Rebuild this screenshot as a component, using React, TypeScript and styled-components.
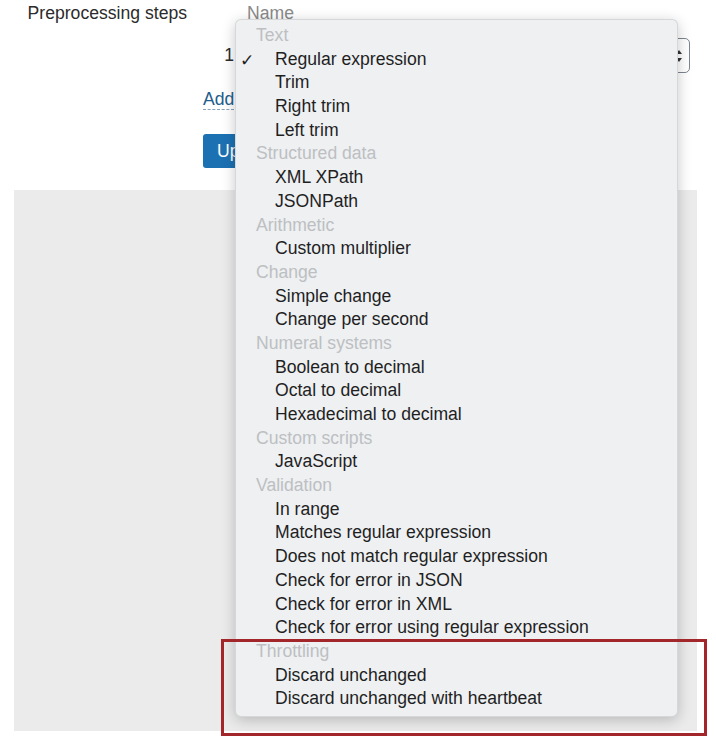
import React from 'react';
import styled, { createGlobalStyle } from 'styled-components';

const GlobalStyle = createGlobalStyle`
  html, body {
    margin: 0;
    padding: 0;
    background: #ffffff;
  }
  body {
    font-family: 'Liberation Sans', Arial, sans-serif;
    color: #262626;
  }
`;

const Page = styled.div`
  position: relative;
  width: 716px;
  height: 744px;
  overflow: hidden;
  background: #fff;
`;

const FormRow = styled.div`
  display: grid;
  grid-template-columns: 187px 487px;
  column-gap: 16px;
`;

const Label = styled.div`
  text-align: right;
  font-size: 17.6px;
  line-height: 22px;
  padding-top: 2px;
  color: #2b2b2b;
`;

const Content = styled.div`
  display: flex;
  flex-direction: column;
`;

const HeaderRow = styled.div`
  padding-left: 44px;
  font-size: 17.6px;
  line-height: 22px;
  padding-top: 2px;
  color: #8a8a8a;
`;

const StepRow = styled.div`
  display: flex;
  align-items: center;
  margin-top: 14px;
  height: 35px;
`;

const StepNum = styled.div`
  width: 31px;
  text-align: right;
  font-size: 17.6px;
  color: #2b2b2b;
`;

const SelectBox = styled.div`
  margin-left: 6px;
  flex: 1;
  height: 35px;
  box-sizing: border-box;
  border: 1px solid #7d8690;
  border-radius: 5px;
  display: flex;
  align-items: center;
  justify-content: flex-end;
  padding-right: 6px;
  background: #fff;
`;

const AddLink = styled.a`
  align-self: flex-start;
  margin-top: 17px;
  font-size: 17.6px;
  line-height: 19px;
  color: #235d8c;
  text-decoration: none;
  border-bottom: 1px dashed #8aa2b8;
`;

const ActionButton = styled.button`
  align-self: flex-start;
  margin-top: 24px;
  height: 34px;
  padding: 0 14px;
  border: none;
  border-radius: 3px;
  background: #1c71b3;
  color: #fff;
  font-family: 'Liberation Sans', Arial, sans-serif;
  font-size: 17.6px;
`;

const GrayPanel = styled.div`
  margin: 22px 0 0 14px;
  width: 683px;
  height: 541px;
  background: #ebebeb;
`;

const Menu = styled.div`
  position: absolute;
  left: 235px;
  top: 19px;
  width: 443px;
  box-sizing: border-box;
  padding: 4px 0 5px;
  background: #eef0f2;
  border: 1px solid rgba(0, 0, 0, 0.1);
  border-radius: 6px;
  box-shadow: 0 3px 14px rgba(0, 0, 0, 0.22);
`;

const Row = styled.div<{ $group?: boolean }>`
  position: relative;
  height: 23.7px;
  line-height: 23.7px;
  font-size: 17.6px;
  white-space: nowrap;
  padding-left: ${(p) => (p.$group ? '20px' : '39px')};
  color: ${(p) => (p.$group ? '#bdbfc2' : '#1f1f1f')};
`;

const Check = styled.span`
  position: absolute;
  left: 4px;
  top: 1px;
  font-size: 17px;
  color: #1f1f1f;
`;

const Highlight = styled.div`
  position: absolute;
  left: 221px;
  top: 639px;
  width: 486px;
  height: 97px;
  box-sizing: border-box;
  border: 3px solid #a3262b;
  pointer-events: none;
`;

const groups: { title: string; items: string[] }[] = [
  { title: 'Text', items: ['Regular expression', 'Trim', 'Right trim', 'Left trim'] },
  { title: 'Structured data', items: ['XML XPath', 'JSONPath'] },
  { title: 'Arithmetic', items: ['Custom multiplier'] },
  { title: 'Change', items: ['Simple change', 'Change per second'] },
  { title: 'Numeral systems', items: ['Boolean to decimal', 'Octal to decimal', 'Hexadecimal to decimal'] },
  { title: 'Custom scripts', items: ['JavaScript'] },
  {
    title: 'Validation',
    items: [
      'In range',
      'Matches regular expression',
      'Does not match regular expression',
      'Check for error in JSON',
      'Check for error in XML',
      'Check for error using regular expression',
    ],
  },
  { title: 'Throttling', items: ['Discard unchanged', 'Discard unchanged with heartbeat'] },
];

const SelectArrows = () => (
  <svg width="8" height="14" viewBox="0 0 8 14">
    <path d="M4 1 L7 5 L1 5 Z" fill="#333" />
    <path d="M4 13 L7 9 L1 9 Z" fill="#333" />
  </svg>
);

export default function App() {
  return (
    <Page>
      <GlobalStyle />
      <FormRow>
        <Label>Preprocessing steps</Label>
        <Content>
          <HeaderRow>Name</HeaderRow>
          <StepRow>
            <StepNum>1</StepNum>
            <SelectBox>
              <SelectArrows />
            </SelectBox>
          </StepRow>
          <AddLink href="#">Add</AddLink>
          <ActionButton>Update</ActionButton>
        </Content>
      </FormRow>
      <GrayPanel />

      <Menu>
        {groups.map((g) => (
          <React.Fragment key={g.title}>
            <Row $group>{g.title}</Row>
            {g.items.map((item) => (
              <Row key={item}>
                {item === 'Regular expression' && <Check>✓</Check>}
                {item}
              </Row>
            ))}
          </React.Fragment>
        ))}
      </Menu>
      <Highlight />
    </Page>
  );
}
